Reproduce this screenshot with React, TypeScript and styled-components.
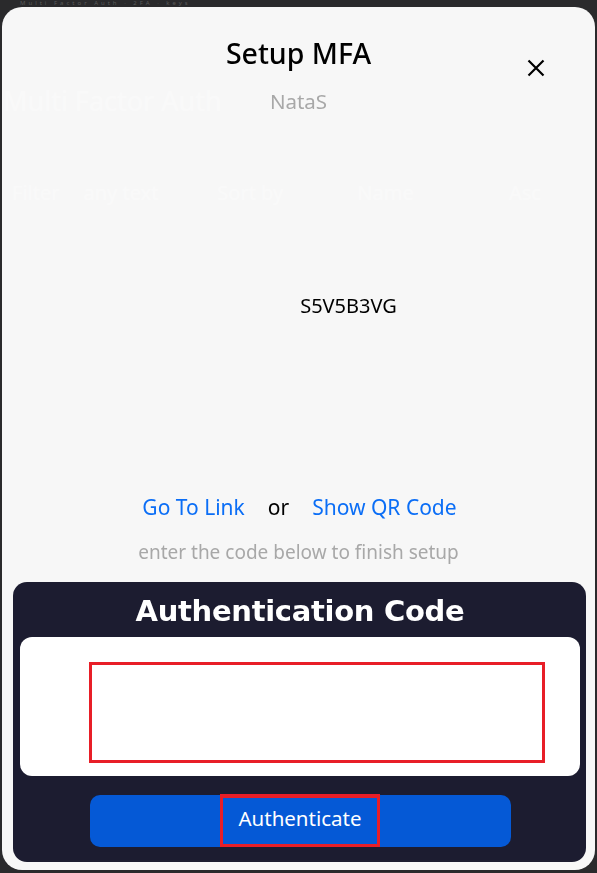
import React from 'react';
import styled, { createGlobalStyle } from 'styled-components';

const GlobalStyle = createGlobalStyle`
  html, body {
    margin: 0;
    padding: 0;
    background: #2a2a2c;
    font-family: 'Noto Sans', 'Open Sans', sans-serif;
  }
`;

/* ---------- page underneath the dialog ---------- */

const Page = styled.div`
  min-height: 873px;
  background: #2a2a2c;
  color: #ffffff;
`;

const TopBar = styled.div`
  font-size: 6px;
  line-height: 7px;
  height: 7px;
  color: #5a5a5a;
  white-space: nowrap;
  padding-left: 20px;
  letter-spacing: 3px;
`;

const Card = styled.div`
  margin: 33px 32px 0 33px;
  height: 120px;
  background: #313134;
  border-radius: 10px;
  display: flex;
  align-items: center;
`;

const CardTitle = styled.h2`
  margin: 0 0 0 -30px;
  font-size: 27px;
  font-weight: 400;
  color: #ffffff;
`;

const FilterRow = styled.div`
  display: flex;
  align-items: center;
  gap: 12px;
  margin: 10px 30px 0 12px;
  font-size: 20px;
`;

const FilterInput = styled.div<{ $w: number }>`
  width: ${p => p.$w}px;
  height: 44px;
  border-radius: 10px;
  background: #38383b;
  display: flex;
  align-items: center;
  padding-left: 12px;
  box-sizing: border-box;
`;

const SortLabel = styled.span`
  width: 120px;
`;

/* ---------- dialog ---------- */

const Overlay = styled.div`
  position: fixed;
  top: 7px;
  left: 2px;
  width: 593px;
  height: 863px;
  border-radius: 20px;
  background: rgba(249, 249, 249, 0.993);
  display: flex;
  flex-direction: column;
  align-items: center;
  box-sizing: border-box;
  padding-top: 27px;
`;

const Title = styled.h1`
  margin: 0;
  font-size: 28.5px;
  line-height: 38px;
  font-weight: 500;
  color: #000;
`;

const CloseButton = styled.button`
  position: absolute;
  top: 51px;
  right: 50px;
  width: 18px;
  height: 20px;
  padding: 0;
  border: none;
  background: transparent;
  cursor: pointer;
  display: flex;
  align-items: center;
  justify-content: center;
`;

const UserName = styled.div`
  margin-top: 16px;
  font-size: 20.5px;
  line-height: 27px;
  color: #a8a8a8;
`;

const SecretCode = styled.div`
  margin-top: 177px;
  padding-left: 100px;
  font-size: 20px;
  line-height: 27px;
  color: #000;
`;

const LinkRow = styled.div`
  margin-top: 175px;
  display: flex;
  align-items: center;
  gap: 23px;
  font-size: 21px;
  line-height: 27px;
  padding-left: 2px;
`;

const TextLink = styled.a`
  color: #0b6ef6;
  text-decoration: none;
  cursor: pointer;
`;

const OrText = styled.span`
  color: #000;
`;

const Hint = styled.div`
  margin-top: 19px;
  font-size: 19px;
  line-height: 25px;
  color: #a8a8a8;
`;

const CodePanel = styled.div`
  margin: 17px 9px 0 11px;
  align-self: stretch;
  height: 280px;
  box-sizing: border-box;
  background: #1c1c30;
  border-radius: 14px;
  padding: 11px 6px 15px 7px;
  display: flex;
  flex-direction: column;
  align-items: center;
`;

const PanelHeading = styled.h2`
  margin: 0;
  font-family: 'DejaVu Sans', sans-serif;
  font-size: 29px;
  line-height: 36px;
  font-weight: 700;
  color: #ffffff;
  letter-spacing: -0.3px;
`;

const InputCard = styled.div`
  margin-top: 8px;
  align-self: stretch;
  height: 139px;
  background: #ffffff;
  border-radius: 12px;
  padding: 25px 35px 0 69px;
  box-sizing: border-box;
`;

const CodeInput = styled.input`
  display: block;
  width: 100%;
  height: 101px;
  box-sizing: border-box;
  border: 3px solid #e81e27;
  background: #ffffff;
  outline: none;
  font-size: 24px;
  font-family: 'Noto Sans', sans-serif;
  text-align: center;
`;

const SubmitButton = styled.button`
  margin-top: 19px;
  width: 421px;
  height: 52px;
  border: none;
  border-radius: 10px;
  background: #0559d6;
  display: flex;
  justify-content: center;
  padding: 0;
  cursor: pointer;
`;

const ButtonLabel = styled.span`
  height: 53px;
  margin-top: -1px;
  box-sizing: border-box;
  border: 3px solid #e81e27;
  border-top-width: 4px;
  padding: 0 15px 7px;
  display: flex;
  align-items: center;
  font-family: 'Noto Sans', sans-serif;
  font-size: 20.5px;
  color: #ffffff;
`;

const App = () => {
  return (
    <>
      <GlobalStyle />
      <Page>
        <TopBar>Multi Factor Auth · 2FA · keys</TopBar>
        <Card>
          <CardTitle>Multi Factor Auth</CardTitle>
        </Card>
        <FilterRow>
          <span>Filter</span>
          <FilterInput $w={138}>any text</FilterInput>
          <SortLabel>Sort by</SortLabel>
          <FilterInput $w={144}>Name</FilterInput>
          <FilterInput $w={72}>Asc</FilterInput>
        </FilterRow>
      </Page>

      <Overlay role="dialog" aria-label="Setup MFA">
        <Title>Setup MFA</Title>
        <CloseButton aria-label="Close">
          <svg width="18" height="18" viewBox="0 0 18 18">
            <path d="M1.5 1.5 L16.5 16.5 M16.5 1.5 L1.5 16.5" stroke="#000" strokeWidth="2.2" />
          </svg>
        </CloseButton>
        <UserName>NataS</UserName>
        <SecretCode>S5V5B3VG</SecretCode>
        <LinkRow>
          <TextLink>Go To Link</TextLink>
          <OrText>or</OrText>
          <TextLink>Show QR Code</TextLink>
        </LinkRow>
        <Hint>enter the code below to finish setup</Hint>
        <CodePanel>
          <PanelHeading>Authentication Code</PanelHeading>
          <InputCard>
            <CodeInput type="text" inputMode="numeric" aria-label="Authentication code" />
          </InputCard>
          <SubmitButton>
            <ButtonLabel>Authenticate</ButtonLabel>
          </SubmitButton>
        </CodePanel>
      </Overlay>
    </>
  );
};

export default App;
